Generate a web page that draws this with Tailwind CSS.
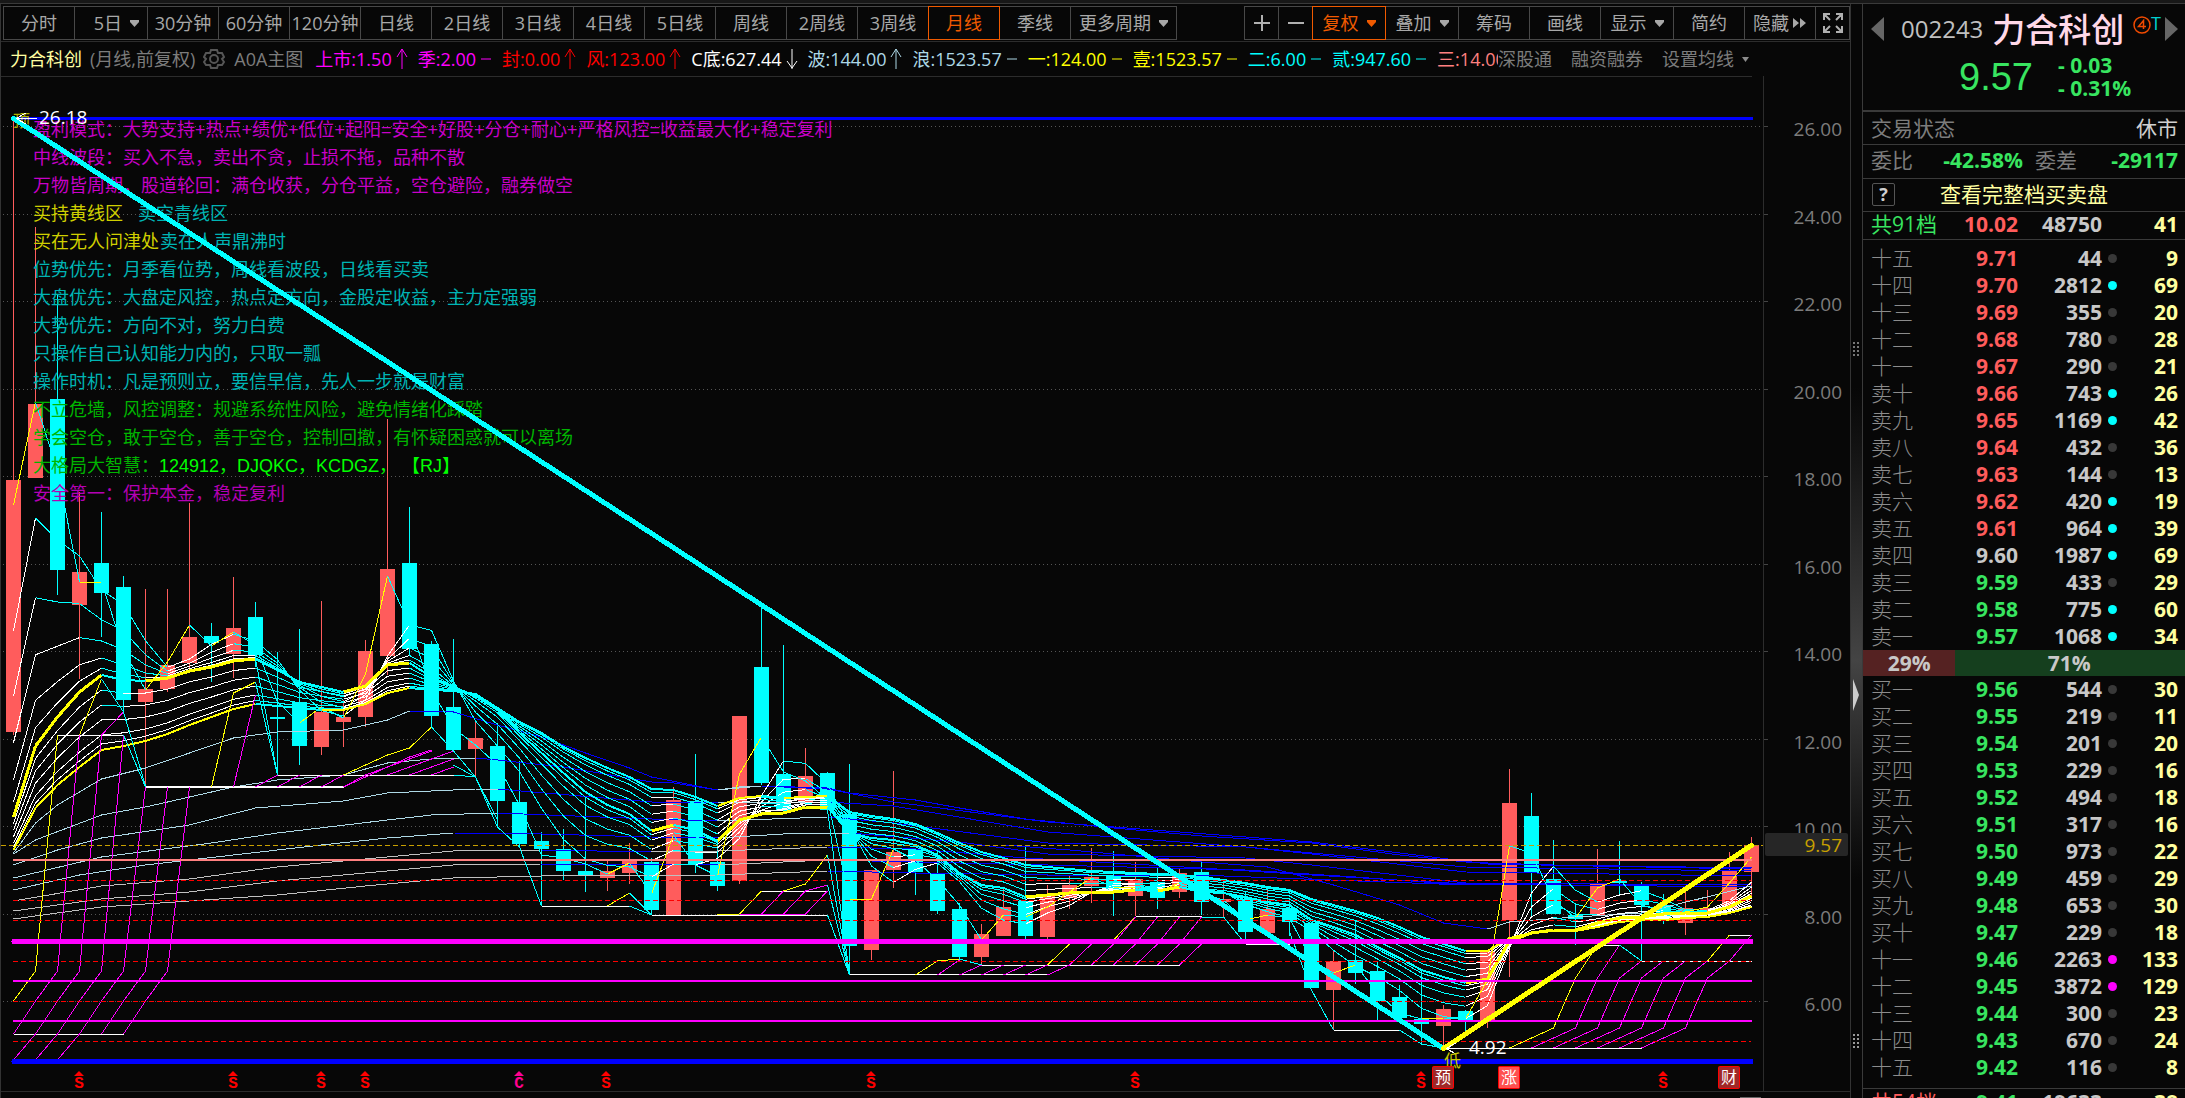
<!DOCTYPE html>
<html lang="zh-CN">
  <head>
    <meta charset="UTF-8" />
    <meta name="viewport" content="width=device-width, initial-scale=1.0" />
    <title>002243 力合科创 月线</title>
    <script src="https://cdn.jsdelivr.net/npm/@tailwindcss/browser@4"></script>
  </head>
  <body class="bg-[#070707] font-['Open_Sans','Noto_Sans_CJK_SC',sans-serif] overflow-hidden">
    <div class="h-[3px] bg-[#181818]"></div>
    <div class="flex h-[calc(100vh-3px)] border-t border-[#3a3a3a]">
      <!-- Chart side -->
      <main class="flex-1 min-w-0 border-x border-[#333]">
        <nav class="flex h-[38px] pt-[2px] pl-[3px] text-lg leading-none text-[#a8a8a8] border-b border-[#2c2c2c] whitespace-nowrap">
          <div id="periods" class="flex h-[34px]"></div>
          <div class="flex-1"></div>
          <div class="flex h-[34px]">
            <button aria-label="放大" class="w-[35px] border border-[#484848] flex items-center justify-center"><svg width="18" height="18" stroke="#b0b0b0" stroke-width="2"><path d="M1 9H17M9 1V17" /></svg></button>
            <button aria-label="缩小" class="w-[35px] -ml-px border border-[#484848] flex items-center justify-center"><svg width="18" height="18" stroke="#b0b0b0" stroke-width="2"><path d="M1 9H17" /></svg></button>
            <button class="w-[74px] -ml-px border border-[#f05a00] text-[#f05a00] z-10 flex items-center justify-center gap-2">复权<svg width="9" height="7" fill="#f05a00"><path d="M0 0H9V2L4.500 7L0 2Z" /></svg></button>
            <button class="w-[74px] -ml-px border border-[#484848] flex items-center justify-center gap-2">叠加<svg width="9" height="7" fill="#a8a8a8"><path d="M0 0H9V2L4.500 7L0 2Z" /></svg></button>
            <button class="w-[72px] -ml-px border border-[#484848]">筹码</button>
            <button class="w-[72px] -ml-px border border-[#484848]">画线</button>
            <button class="w-[74px] -ml-px border border-[#484848] flex items-center justify-center gap-2">显示<svg width="9" height="7" fill="#a8a8a8"><path d="M0 0H9V2L4.500 7L0 2Z" /></svg></button>
            <button class="w-[72px] -ml-px border border-[#484848]">简约</button>
            <button class="w-[72px] -ml-px border border-[#484848] flex items-center justify-center gap-1">隐藏<svg width="14" height="10" fill="#a8a8a8"><path d="M0 0L6 5L0 10ZM7 0L13 5L7 10Z" /></svg></button>
            <button aria-label="全屏" class="w-[35px] -ml-px border border-[#484848] flex items-center justify-center"><svg width="20" height="20" fill="none" stroke="#b0b0b0" stroke-width="2"><path d="M1 7V1H7M1 1L7 7M13 1H19V7M19 1L13 7M1 13V19H7M1 19L7 13M19 13V19H13M19 19L13 13" /></svg></button>
          </div>
        </nav>

        <div class="flex h-[34px] items-center pl-[9px] text-lg leading-none whitespace-nowrap">
          <span class="text-[#ffffa0] mr-2">力合科创</span>
          <span class="text-[#7c7c7c] mr-2">(月线,前复权)</span>
          <svg class="mr-[9px]" width="22" height="22" fill="none" stroke="#565656" stroke-width="2"><path d="M8 2H14L15 5L19 5L21 9L19 11L21 14L19 17L15 17L14 20H8L7 17L3 17L1 14L3 11L1 9L3 5L7 5Z" /><circle cx="11" cy="11" r="4" /></svg>
          <span class="text-[#7c7c7c] mr-3">A0A主图</span>
          <div id="indicators" class="flex flex-1 w-0 overflow-hidden"></div>
          <span class="text-[#7c7c7c]">深股通</span>
          <span class="text-[#7c7c7c] ml-[19px]">融资融券</span>
          <button class="text-[#7c7c7c] ml-[19px] mr-[101px] flex items-center gap-2">设置均线<svg width="7" height="5" fill="#8c8c8c"><path d="M0 0H7L3.500 5Z" /></svg></button>
        </div>

        <svg id="chart" viewBox="1 76 1849 1022" class="block w-full h-auto"></svg>
      </main>

      <!-- Splitter -->
      <div class="w-[11px] flex flex-col items-center justify-between pt-[338px] pb-[50px] bg-linear-to-b from-[#070707] from-35% via-[#444] via-60% to-[#070707] to-80%">
        <svg width="7" height="14" fill="#777"><path d="M0 0h2v2h-2zM4 0h2v2h-2zM0 4h2v2h-2zM4 4h2v2h-2zM0 8h2v2h-2zM4 8h2v2h-2zM0 12h2v2h-2zM4 12h2v2h-2z" /></svg>
        <svg width="7" height="32" fill="#ccc"><path d="M0 0L6 16L0 32Z" /></svg>
        <svg width="7" height="14" fill="#999"><path d="M0 0h2v2h-2zM4 0h2v2h-2zM0 4h2v2h-2zM4 4h2v2h-2zM0 8h2v2h-2zM4 8h2v2h-2zM0 12h2v2h-2zM4 12h2v2h-2z" /></svg>
      </div>

      <!-- Quote panel -->
      <aside class="w-[323px] border-l border-[#3a3a3a] text-[21px] leading-none whitespace-nowrap">
        <header class="h-[108px] border-b-2 border-[#3a3a3a] pt-[5px]">
          <div class="flex h-[40px] items-center pl-2 pr-[7px]">
            <button aria-label="上一只"><svg width="13" height="24" fill="#666"><path d="M13 0V24L0 12Z" /></svg></button>
            <span class="text-2xl leading-none text-[#c0c0c0] ml-[17px]">002243</span>
            <h1 class="text-[33px] leading-none font-medium text-[#ffd8e8] ml-[9px]">力合科创</h1>
            <svg class="ml-auto -mt-2" width="18" height="18" fill="none" stroke="#f04a00" stroke-width="1.500"><circle cx="9" cy="9" r="8" /><path d="M10.500 13V4.500L5.500 10.500H13" /></svg>
            <span class="text-lg leading-none text-[#00d0d0] -mt-3">T</span>
            <button aria-label="下一只" class="ml-1"><svg width="13" height="24" fill="#666"><path d="M0 0V24L13 12Z" /></svg></button>
          </div>
          <div class="flex items-center pl-[96px] pt-[5px] text-[#38e560]">
            <span class="font-['Liberation_Sans',sans-serif] text-[38px] leading-none">9.57</span>
            <div class="ml-[25px] font-bold leading-[23px]">
              <p>- 0.03</p>
              <p>- 0.31%</p>
            </div>
          </div>
        </header>
        <div class="flex h-[33px] items-center justify-between pl-2 pr-[7px] border-b border-[#3a3a3a] text-[#7c7c7c]">
          <span>交易状态</span><span class="text-[#d0d0d0]">休市</span>
        </div>
        <div class="flex h-[34px] items-center pl-2 pr-[7px] pb-[2px] border-b border-[#3a3a3a] text-[#7c7c7c]">
          <span>委比</span><b class="w-[110px] text-right text-[#38e560]">-42.58%</b><span class="ml-3">委差</span><b class="ml-auto text-[#38e560]">-29117</b>
        </div>
        <div class="flex h-[33px] items-center pl-[9px] pb-[2px] border-b border-[#3a3a3a]">
          <button class="size-[23px] rounded-xs border border-[#555] text-[#d0d0d0] font-bold text-lg leading-none">?</button>
          <a href="#" class="ml-[45px] text-[#ffffa0]">查看完整档买卖盘</a>
        </div>
        <div class="flex h-[28px] items-center pl-2 pr-[7px] pb-[2px] border-b border-[#3a3a3a]">
          <span class="w-[65px] text-[#38e560]">共91档</span>
          <b class="w-[82px] text-right text-[#ff5c5c]">10.02</b>
          <b class="w-[84px] text-right text-[#c8c8c8]">48750</b>
          <b class="ml-auto text-[#ffffa0]">41</b>
        </div>
        <table class="mt-[5px] w-full table-fixed"><tbody id="asks"></tbody></table>
        <div class="flex h-[26px] items-center font-bold text-[#c8c8c8]">
          <div class="h-full bg-[#552222] flex items-center justify-center" style="width: 28.7%">29%</div>
          <div class="h-full flex-1 bg-[#153f1e] flex items-center justify-center pr-[2px]">71%</div>
        </div>
        <table class="w-full table-fixed"><tbody id="bids"></tbody></table>
        <div class="flex mt-[7px] h-[28px] items-center pl-2 pr-[7px] border-t border-[#3a3a3a]">
          <span class="w-[65px] text-[#ff5c5c]">共54档</span>
          <b class="w-[82px] text-right text-[#38e560]">9.41</b>
          <b class="w-[84px] text-right text-[#c8c8c8]">19633</b>
          <b class="ml-auto text-[#ffffa0]">38</b>
        </div>
      </aside>
    </div>

    <script>
      // ---------- toolbar ----------
      const arrow = '<svg width="9" height="7" fill="#a8a8a8"><path d="M0 0H9V2L4.500 7L0 2Z"/></svg>';
      document.getElementById("periods").innerHTML = "分时,5日,30分钟,60分钟,120分钟,日线,2日线,3日线,4日线,5日线,周线,2周线,3周线,月线,季线,更多周期"
        .split(",")
        .map((name) => {
          if (name === "5日") return `<button class="w-[74px] -ml-px border border-[#484848] flex items-center justify-end pr-2 gap-2">${name}${arrow}</button>`;
          if (name === "更多周期") return `<button class="w-[107px] -ml-px border border-[#484848] flex items-center justify-center gap-2">${name}${arrow}</button>`;
          if (name === "月线") return `<button class="w-[72px] -ml-px border border-[#f05a00] text-[#f05a00] z-10">${name}</button>`;
          return `<button class="w-[72px] -ml-px border border-[#484848]">${name}</button>`;
        })
        .join("");

      // ---------- indicator values ----------
      const marks = {
        u: "M10 21V1M5 9L10 1L15 9",
        d: "M10 1V21M5 13L10 20L15 13",
        n: "M5 11H15",
      };
      document.getElementById("indicators").innerHTML = [
        ["上市:1.50", "#f0f", "u"], ["季:2.00", "#f0f", "n"], ["封:0.00", "#f00", "u"], ["风:123.00", "#f00", "u"],
        ["C底:627.44", "#fff", "d"], ["波:144.00", "#add8e6", "u"], ["浪:1523.57", "#add8e6", "n"], ["一:124.00", "#ff0", "n"],
        ["壹:1523.57", "#ff0", "n"], ["二:6.00", "#0ff", "n"], ["贰:947.60", "#0ff", "n"], ["三:14.00", "#ff8080", "n"],
      ]
        .map(([t, c, m]) => `<span class="flex shrink-0 items-center" style="color:${c}">${t}<svg class="w-[26px] h-[22px] shrink-0" fill="none" stroke="currentColor"><path d="${marks[m]}"/></svg></span>`)
        .join("");

      // ---------- order book ----------
      const row = ([label, price, vol, dot, n]) => {
        const color = price > 9.6 ? "#ff5c5c" : price < 9.6 ? "#38e560" : "#c8c8c8";
        return `<tr class="h-[27px]"><th class="w-[73px] p-0 pl-2 text-left font-light text-[#8c8c8c]">${label}</th>
          <td class="w-[82px] p-0 text-right font-bold" style="color:${color}">${price}</td>
          <td class="w-[84px] p-0 text-right font-bold text-[#c8c8c8]">${vol}</td>
          <td class="w-[20px] p-0 pl-[6px]"><div class="size-[9px] rounded-full" style="background:${{ c: "#0ff", m: "#f0f" }[dot] || "#383838"}"></div></td>
          <td class="p-0 pr-[7px] text-right font-bold text-[#ffffa0]">${n}</td></tr>`;
      };
      const book = (id, s) => (document.getElementById(id).innerHTML = s.split("|").map((r) => row(r.trim().split(" "))).join(""));
      book("asks", "十五 9.71 44 - 9|十四 9.70 2812 c 69|十三 9.69 355 - 20|十二 9.68 780 - 28|十一 9.67 290 - 21|卖十 9.66 743 c 26|卖九 9.65 1169 c 42|卖八 9.64 432 - 36|卖七 9.63 144 - 13|卖六 9.62 420 c 19|卖五 9.61 964 c 39|卖四 9.60 1987 c 69|卖三 9.59 433 - 29|卖二 9.58 775 c 60|卖一 9.57 1068 c 34");
      book("bids", "买一 9.56 544 - 30|买二 9.55 219 - 11|买三 9.54 201 - 20|买四 9.53 229 - 16|买五 9.52 494 - 18|买六 9.51 317 - 16|买七 9.50 973 - 22|买八 9.49 459 - 29|买九 9.48 653 - 30|买十 9.47 229 - 18|十一 9.46 2263 m 133|十二 9.45 3872 m 129|十三 9.44 300 - 23|十四 9.43 670 - 24|十五 9.42 116 - 8");

      // ---------- chart ----------
      const X = (i) => 13.5 + i * 22;
      const out = [];
      const line = (x1, y1, x2, y2, c, w = 1, extra = "") => out.push(`<line x1="${x1}" y1="${y1}" x2="${x2}" y2="${y2}" stroke="${c}" stroke-width="${w}" ${extra}/>`);
      const poly = (pts, c, w = 1) => out.push(`<polyline points="${pts.map(([i, y]) => X(i) + "," + y).join(" ")}" fill="none" stroke="${c}" stroke-width="${w}"/>`);
      const text = (x, y, t, c, size = 18, extra = "") => out.push(`<text x="${x}" y="${y}" fill="${c}" font-size="${size}" ${extra}>${t}</text>`);

      out.push('<g shape-rendering="crispEdges">');
      // frame and price grid
      line(1, 76, 1752, 76, "#2c2c2c");
      line(1763.5, 40, 1763.5, 1091, "#2c2c2c");
      line(1, 1091.5, 1850, 1091.5, "#2c2c2c");
      line(1740, 1097.5, 1761, 1097.5, "#666");
      for (let k = 0; k <= 10; k++) {
        const y = Math.round(126.3 + k * 87.5) + 0.5;
        line(3, y, 1763, y, "#555", 1, 'stroke-dasharray="1 3"');
        line(1764, y, 1768, y, "#444");
        text(1842, y + 9, (26 - 2 * k).toFixed(2), "#7c7c7c", 19, 'text-anchor="end"');
      }

      // notes
      const notes = [
        [130, "盈利模式：大势支持+热点+绩优+低位+起阳=安全+好股+分仓+耐心+严格风控=收益最大化+稳定复利", "#c800c8"],
        [158, "中线波段：买入不急，卖出不贪，止损不拖，品种不散", "#c800c8"],
        [186, "万物皆周期，股道轮回：满仓收获，分仓平益，空仓避险，融券做空", "#c800c8"],
        [214, "买持黄线区", "#d0d000"],
        [242, "买在无人问津处", "#d0d000"],
        [270, "位势优先：月季看位势，周线看波段，日线看买卖", "#00b4b4"],
        [298, "大盘优先：大盘定风控，热点定方向，金股定收益，主力定强弱", "#00b4b4"],
        [326, "大势优先：方向不对，努力白费", "#00b4b4"],
        [354, "只操作自己认知能力内的，只取一瓢", "#00b4b4"],
        [382, "操作时机：凡是预则立，要信早信，先人一步就是财富", "#00b4b4"],
        [410, "不立危墙，风控调整：规避系统性风险，避免情绪化踩踏", "#00b400"],
        [438, "学会空仓，敢于空仓，善于空仓，控制回撤，有怀疑困惑就可以离场", "#00b400"],
        [466, '大格局大智慧：<tspan fill="#0f0">124912，DJQKC，KCDGZ， 【RJ】</tspan>', "#00b400"],
        [494, "安全第一：保护本金，稳定复利", "#b400b4"],
      ];

      // candles: dir, high, body top, body bottom, low (1 = up)
      const K = [
        [1,118,480,732,735],[1,227,404,478,478],[0,295,399,570,595],[1,492,572,605,679],[0,512,563,593,637],[0,576,587,700,712],[1,589,689,702,787],[1,589,665,689,692],[1,503,637,663,670],[0,623,636,643,682],
        [1,577,628,654,678],[0,602,617,655,667],[0,652,717,718,775],[0,629,702,746,765],[1,601,712,747,755],[1,700,717,722,747],[1,640,651,717,727],[1,419,569,656,675],[0,507,563,649,655],[0,641,644,716,728],
        [0,639,707,750,750],[1,721,738,749,777],[0,723,746,801,827],[0,761,802,844,846],[0,832,841,849,906],[0,829,849,871,880],[0,796,871,876,892],[1,860,871,878,891],[1,843,860,873,884],[0,858,862,910,915],
        [1,787,800,915,915],[0,754,801,864,873],[0,840,862,886,891],[1,716,716,881,884],[0,607,667,783,785],[0,645,774,811,811],[1,748,776,803,803],[0,772,773,810,810],[0,764,814,946,975],[1,870,870,950,960],
        [1,771,852,870,888],[0,849,850,872,895],[0,850,873,911,914],[0,903,909,957,960],[1,924,934,957,965],[1,889,907,936,936],[0,847,901,936,939],[1,885,894,937,940],[1,876,885,898,909],[1,848,877,886,903],
        [0,851,875,893,916],[1,862,879,896,916],[0,868,882,898,909],[1,868,873,892,898],[0,862,872,902,915],[1,883,899,902,917],[0,892,899,932,939],[1,887,909,933,933],[0,898,908,922,936],[0,923,923,988,988],
        [1,950,961,990,1030],[0,921,960,973,984],[0,962,971,1001,1020],[0,985,997,1018,1018],[0,971,1019,1024,1043],[1,1005,1009,1026,1048],[0,1010,1011,1020,1031],[1,950,951,1021,1028],[1,769,803,920,977],[0,793,816,873,916],
        [0,840,879,914,914],[0,903,915,919,945],[1,849,884,915,915],[0,841,881,883,895],[0,882,886,905,961],[0,894,905,920,924],[1,891,908,923,935],[1,890,908,910,915],[1,852,871,908,908],[1,837,845,872,896],
      ];
      K.forEach(([up, h, t, b, l], i) => {
        const c = up ? "#ff5c5c" : "#0ff";
        line(X(i), h, X(i), l, c);
        out.push(`<rect x="${X(i) - 7.5}" y="${t}" width="15" height="${Math.max(2, b - t)}" fill="${c}"/>`);
      });

      // moving averages, each segment coloured by its direction
      const ma = (v, up, down, wUp = 1, wDown = wUp) => {
        let d = { u: "", d: "" };
        for (let i = 1; i < v.length; i++) d[v[i] <= v[i - 1] ? "u" : "d"] += `M${X(i - 1)} ${v[i - 1]}L${X(i)} ${v[i]}`;
        out.push(`<path d="${d.u}" stroke="${up}" fill="none" stroke-width="${wUp}"/><path d="${d.d}" stroke="${down}" fill="none" stroke-width="${wDown}"/>`);
      };
      // fills the bars between given [bar, y] points
      const fill = (s) => {
        const p = s.split(" ").map((q) => q.split(",").map(Number));
        const v = [];
        for (let k = 1; k < p.length; k++)
          for (let i = p[k - 1][0]; i <= p[k][0]; i++) v[i] = p[k - 1][1] + ((p[k][1] - p[k - 1][1]) * (i - p[k - 1][0])) / (p[k][0] - p[k - 1][0]);
        return v;
      };
      const C = [505,402,470,582,582,650,690,662,625,646,632,645,702,723,707,718,674,576,625,690,728,745,765,805,855,858,864,874,863,894,835,865,876,774,737,772,781,800,899,899,849,860,880,905,940,915,917,907,892,878,887,887,892,883,893,900,920,915,918,960,973,965,993,1013,1019,1018,1019,980,846,853,900,918,888,879,905,912,912,907,883,857];
      const M = [817,746,717,692,675,680,681,678,671,667,661,659,670,682,687,692,686,665,663,677,687,696,710,733,753,773,792,805,814,831,825,830,841,820,814,813,807,807,833,838,840,845,855,873,885,888,897,895,893,892,892,890,891,887,892,893,897,902,905,920,927,935,947,958,970,977,983,979,941,933,930,930,923,918,917,914,913,913,907,896];
      const S = [850,808,785,767,750,746,741,734,725,717,709,704,706,708,710,710,704,693,688,690,691,694,708,722,733,747,758,768,777,789,790,797,806,798,796,798,797,796,812,816,819,824,833,843,852,858,865,867,869,871,872,873,874,875,877,880,883,887,890,899,905,911,918,927,937,944,951,951,938,933,931,931,927,922,920,920,918,917,913,907];
      const F = C.map((c, i) => (i < 5 ? [631, 518, 540, 556, 590][i] : (C[i] + C[i - 1] + C[i - 2]) / 3));
      const mix = (a, b, f) => a.map((v, i) => v + (b[i] - v) * f);

      const slow = [
        "0,853 1,823 2,805 4,779 6,768 8,753 10,738 12,732 15,730 17,720 18,711 20,712 22,725 24,737 26,753 28,768 29,777 32,790 33,787 34,786 37,788 38,793 41,800 43,808 46,819 50,828 54,836 59,843 63,855 66,862 67,863 70,865 79,868",
        "0,854 1,840 4,815 6,807 10,787 12,780 15,775 17,763 19,759 21,758 22,760 25,767 29,782 30,783 32,790 34,786 37,789 40,802 47,822 59,842 67,864 79,869",
        "0,865 2,850 4,838 8,825 11,808 15,801 17,793 21,789 22,789 29,802 32,803 37,802 40,806 47,832 56,847 66,867 79,871",
        "0,878 4,857 9,843 12,833 17,820 19,815 22,813 29,819 32,821 37,817 40,823 47,843 56,847 59,854 66,872 79,876",
        "0,890 3,875 6,865 10,855 14,845 17,838 20,833 24,834 29,837 32,838 35,834 38,833 43,842 47,854 56,858 59,865 66,883 79,885",
      ];
      slow.forEach((s) => ma(fill(s), "#add8e6", "#00f"));
      [
        "0,901 4,886 8,879 12,867 16,859 20,851 24,850 29,852 32,851 37,847 41,849 46,858 54,868 59,875 66,884 79,887",
        "0,911 4,899 8,892 12,881 16,873 20,865 24,864 32,865 37,860 41,862 47,865 56,870 61,877 66,885",
        "0,919 4,907 8,901 12,895 16,886 20,878 24,876 29,875 32,875 37,871 41,873 47,875 55,876 66,885",
      ].forEach((s) => ma(fill(s), "#c0c0c0", "#00f"));
      poly([[45,845],[48,850],[54,862],[57,867],[60,885],[63,905],[65,923],[67,929]], "#00f");
      poly([[67,929],[68,922],[71,917],[74,913],[79,886]], "#add8e6");

      [0, 0.35, 0.6, 0.8, 0.92].forEach((f) => ma(mix(F, M, f), "#fff", "#0ff"));
      [0.2, 0.4, 0.6, 0.8, 0.92].forEach((f) => ma(mix(M, S, f), "#fff", "#0ff"));
      ma(C, "#ff0", "#0ff");
      ma(M, "#ff0", "#0ff", 3, 2);
      ma(S, "#ff0", "#0ff", 2);

      // low channel
      const W = "#fff", Y = "#ff0", P = "#f0f", A = "#0ff";
      [
        [[0,1034.5],[5,1034.5]], [[2,735.5],[5,735.5]], [[12,775.5],[20,775.5]], [[24,906.5],[28,906.5]], [[29,915.5],[37,915.5]],
        [[34,891.5],[37,891.5]], [[38,974.5],[47,974.5]], [[44,965.5],[53,965.5]], [[51,916.5],[54,916.5]], [[56,944.5],[58,944.5]],
        [[60,1030.5],[63,1030.5]], [[65,1048.5],[74,1048.5]], [[72,945.5],[73,945.5]], [[74,961.5],[79,961.5]], [[78,935.5],[79,935.5]],
      ].forEach((p) => poly(p, W));
      poly([[6,787],[15,787]], W, 2);
      [
        [[0,1001],[1,971],[2,735]], [[3,735],[4,679]], [[9,787],[10,693],[11,682]], [[15,775],[17,755],[18,748],[19,727]], [[27,906],[28,893]],
        [[32,915],[33,914],[34,891]], [[35,891],[36,884],[37,855]], [[41,975],[42,961],[43,959]], [[47,965],[48,944],[50,940],[51,917]],
        [[68,1048],[70,1028],[71,978],[72,945]], [[77,961],[78,935]],
      ].forEach((p) => poly(p, Y));
      for (let k = 0; k < 6; k++) poly([[k,1034],[k + 1,1001],[k + 2,971],[k + 3,k < 3 ? 735 : 787]], P);
      for (let k = 0; k < 3; k++) poly([[k,1060],[k + 1,1034]], P);
      for (let k = 11; k < 16; k++) poly([[k,787],[k + 1,775]], P);
      for (let k = 15; k < 20; k++) poly(k === 15 ? [[15,787],[18,757],[19,750]] : [[k,775],[Math.min(k + 3, 20),775 - 8 * (Math.min(k + 3, 20) - k)]], P);
      for (let k = 33; k < 36; k++) poly([[k,914],[k + 1,914],[k + 2,891]], P);
      for (let k = 42; k < 48; k++) poly([[k,975],[k + 1,k === 42 ? 960 : 965]], P);
      for (let k = 48; k < 54; k++) poly([[k,965],[k + 1,944]], P);
      for (let k = 50; k < 54; k++) poly([[k,944],[k + 1,917]], P);
      for (let k = 69; k < 75; k++) poly([[k,1048],[k + 2,1028],[k + 3,978],k === 69 ? [k + 4,945] : [k + 4,961]], P);
      poly([[4,735],[5,712]], P); poly([[10,787],[11,695]], P); poly([[36,891],[37,885]], P); poly([[78,961],[79,935]], P);
      [
        [[4,679],[5,712],[6,786]], [[5,735],[6,787]], [[11,659],[12,775]], [[11,682],[12,775]], [[19,727],[20,751],[21,777]], [[20,775],[21,777],[22,827],[23,847],[24,906]],
        [[20,765],[21,777],[22,820]], [[28,893],[29,915]], [[28,906],[29,915]], [[37,810],[38,975]], [[37,855],[38,975]], [[37,885],[38,975]], [[37,915],[38,975]],
        [[43,959],[44,965]], [[54,917],[55,917],[56,944]], [[58,932],[59,990],[60,1030]], [[63,1030],[64,1044],[65,1048]], [[73,945],[74,961]],
      ].forEach((p) => poly(p, A));

      // levels
      line(1, 845.5, 1763, 845.5, "#c8a000", 1, 'stroke-dasharray="5 3"');
      [880.5, 900.5, 920.5, 961.5, 1001.5, 1041.5].forEach((y) => line(13, y, 1751, y, "#f00", 1, 'stroke-dasharray="5 3"'));
      line(13, 860, 1752, 860, "#ff8080", 2);
      line(12, 118.5, 1753, 118.5, "#00f", 3);
      line(14, 941.5, 1751, 941.5, P, 5, 'stroke-linecap="round"');
      line(13, 981, 1752, 981, P, 2);
      line(13, 1021, 1752, 1021, P, 2);
      line(14, 1061.5, 1751, 1061.5, "#00f", 5, 'stroke-linecap="round"');

      const song = `font-family="'Liberation Sans','Noto Sans CJK SC',sans-serif"`;
      notes.forEach(([y, t, c]) => text(33, y + 6, t, c, 18, song));
      text(138, 220, "卖空青线区", "#00b4b4", 18, song);
      text(160, 248, "卖在人声鼎沸时", "#00b4b4", 18, song);
      text(13, 127, "顶", "#b0b000", 17);
      line(13.5, 118.5, 1443.5, 1048.5, A, 5, 'stroke-linecap="round"');
      line(1443.5, 1048.5, 1751.5, 845.5, Y, 5, 'stroke-linecap="round"');
      out.push('<path d="M37 118.500H16L26 113M16 118.500L26 124M1465 1048.500H1446L1456 1043M1446 1048.500L1456 1054" fill="none" stroke="#fff"/>');
      text(39, 124, "26.18", W, 19);
      text(1469, 1054, "4.92", W, 19);
      text(1444, 1067, "低", "#c8c800", 17);
      out.push("</g>");

      // current price tag
      out.push('<rect x="1765" y="833" width="83" height="23" rx="2" fill="#262626"/>');
      text(1842, 852, "9.57", "#c8a000", 19, 'text-anchor="end"');

      // event marks
      [[79, "S"], [233, "S"], [321, "S"], [365, "S"], [519, "C"], [606, "S"], [871, "S"], [1135, "S"], [1421, "S"], [1663, "S"]].forEach(([x, t]) => {
        const c = t === "C" ? "#ff0090" : "#f00";
        out.push(`<path d="M${x} 1071l5 5h-10z" fill="${c}"/>`);
        text(x, 1088, t, c, 16, `text-anchor="middle" font-weight="bold" font-family="Liberation Mono"`);
      });
      [[1432, "预", "#a02828"], [1498, "涨", "#ff5050"], [1718, "财", "#a02828"]].forEach(([x, t, c]) => {
        out.push(`<rect x="${x + 0.5}" y="1066.500" width="21" height="22" rx="1" fill="${c}" stroke="#f00"/>`);
        text(x + 11, 1083, t, "#fff", 16, 'text-anchor="middle"');
      });
      document.getElementById("chart").innerHTML = out.join("");
    </script>
  </body>
</html>
